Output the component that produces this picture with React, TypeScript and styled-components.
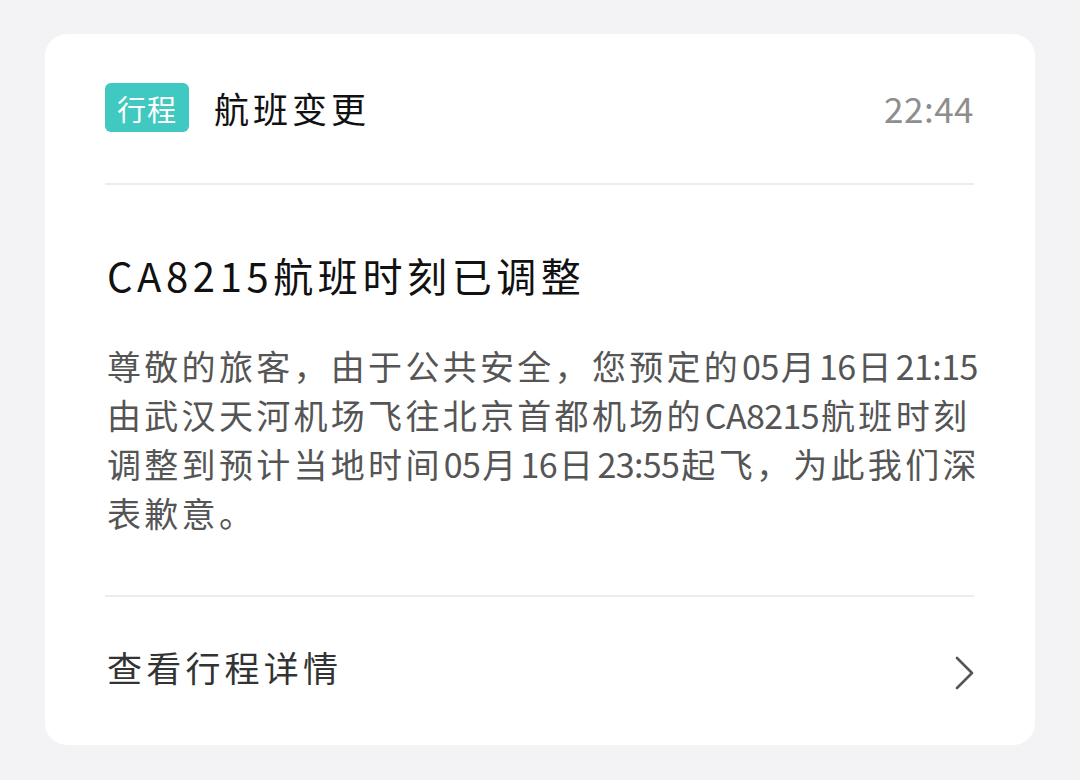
import styled, { createGlobalStyle } from "styled-components";

const GlobalStyle = createGlobalStyle`
  html, body {
    margin: 0;
    padding: 0;
    background: #f3f3f5;
  }
  body {
    font-family: "Noto Sans CJK SC", "Noto Sans", sans-serif;
  }
`;

const Page = styled.div`
  width: 1080px;
  height: 780px;
  padding: 34px 45px 0 45px;
  box-sizing: border-box;
`;

const Card = styled.div`
  width: 990px;
  height: 711px;
  background: #ffffff;
  border-radius: 22px;
  padding: 0 61px 0 60px;
  box-sizing: border-box;
  display: flex;
  flex-direction: column;
`;

const Header = styled.div`
  display: flex;
  align-items: center;
  height: 151px;
  box-sizing: border-box;
  border-bottom: 2px solid #ececec;
  padding-bottom: 2px;
`;

const Badge = styled.span`
  display: inline-flex;
  align-items: center;
  justify-content: center;
  width: 84px;
  height: 49px;
  border-radius: 6px;
  background: #40c9c0;
  color: #ffffff;
  font-size: 29px;
  letter-spacing: 1px;
  margin-right: 25px;
`;

const Title = styled.span`
  font-size: 35px;
  letter-spacing: 4px;
  color: #111111;
  flex: 1;
`;

const Time = styled.span`
  font-size: 35px;
  color: #8e8e8e;
  letter-spacing: 0.5px;
`;

const Heading = styled.h1`
  margin: 62px 0 0 2px;
  font-size: 40px;
  font-weight: 400;
  line-height: 56px;
  letter-spacing: 4.6px;
  color: #111111;
`;

const Body = styled.div`
  margin: 38px 0 0 2px;
  font-size: 34px;
  line-height: 49px;
  letter-spacing: 3.3px;
  color: #555555;
`;

const Line = styled.div`
  white-space: nowrap;
`;

const Lat = styled.span`
  letter-spacing: -0.6px;
  margin: 0 2px 0 1px;
`;

const Footer = styled.div`
  margin-top: 58px;
  border-top: 2px solid #ececec;
  display: flex;
  align-items: center;
  justify-content: space-between;
  padding: 46px 0 0 2px;
`;

const FooterLabel = styled.span`
  font-size: 35px;
  line-height: 40px;
  letter-spacing: 4.2px;
  color: #333333;
`;

const Chevron = styled.svg`
  width: 22px;
  height: 36px;
  margin-top: 12px;
  margin-right: -2px;
`;

const lines = [
  "尊敬的旅客，由于公共安全，您预定的05月16日21:15",
  "由武汉天河机场飞往北京首都机场的CA8215航班时刻",
  "调整到预计当地时间05月16日23:55起飞，为此我们深",
  "表歉意。",
];

const withLatin = (s: string) =>
  s.split(/([A-Za-z0-9:]+)/).map((p, i) =>
    /[A-Za-z0-9]/.test(p) ? <Lat key={i}>{p}</Lat> : p
  );

export default function App() {
  return (
    <>
      <GlobalStyle />
      <Page>
        <Card>
          <Header>
            <Badge>行程</Badge>
            <Title>航班变更</Title>
            <Time>22:44</Time>
          </Header>
          <Heading>CA8215航班时刻已调整</Heading>
          <Body>
            {lines.map((l) => (
              <Line key={l}>{withLatin(l)}</Line>
            ))}
          </Body>
          <Footer>
            <FooterLabel>查看行程详情</FooterLabel>
            <Chevron viewBox="0 0 22 36">
              <path d="M3 3 L18 18 L3 33" fill="none" stroke="#555555" strokeWidth="2.6" strokeLinecap="round" strokeLinejoin="round" />
            </Chevron>
          </Footer>
        </Card>
      </Page>
    </>
  );
}
